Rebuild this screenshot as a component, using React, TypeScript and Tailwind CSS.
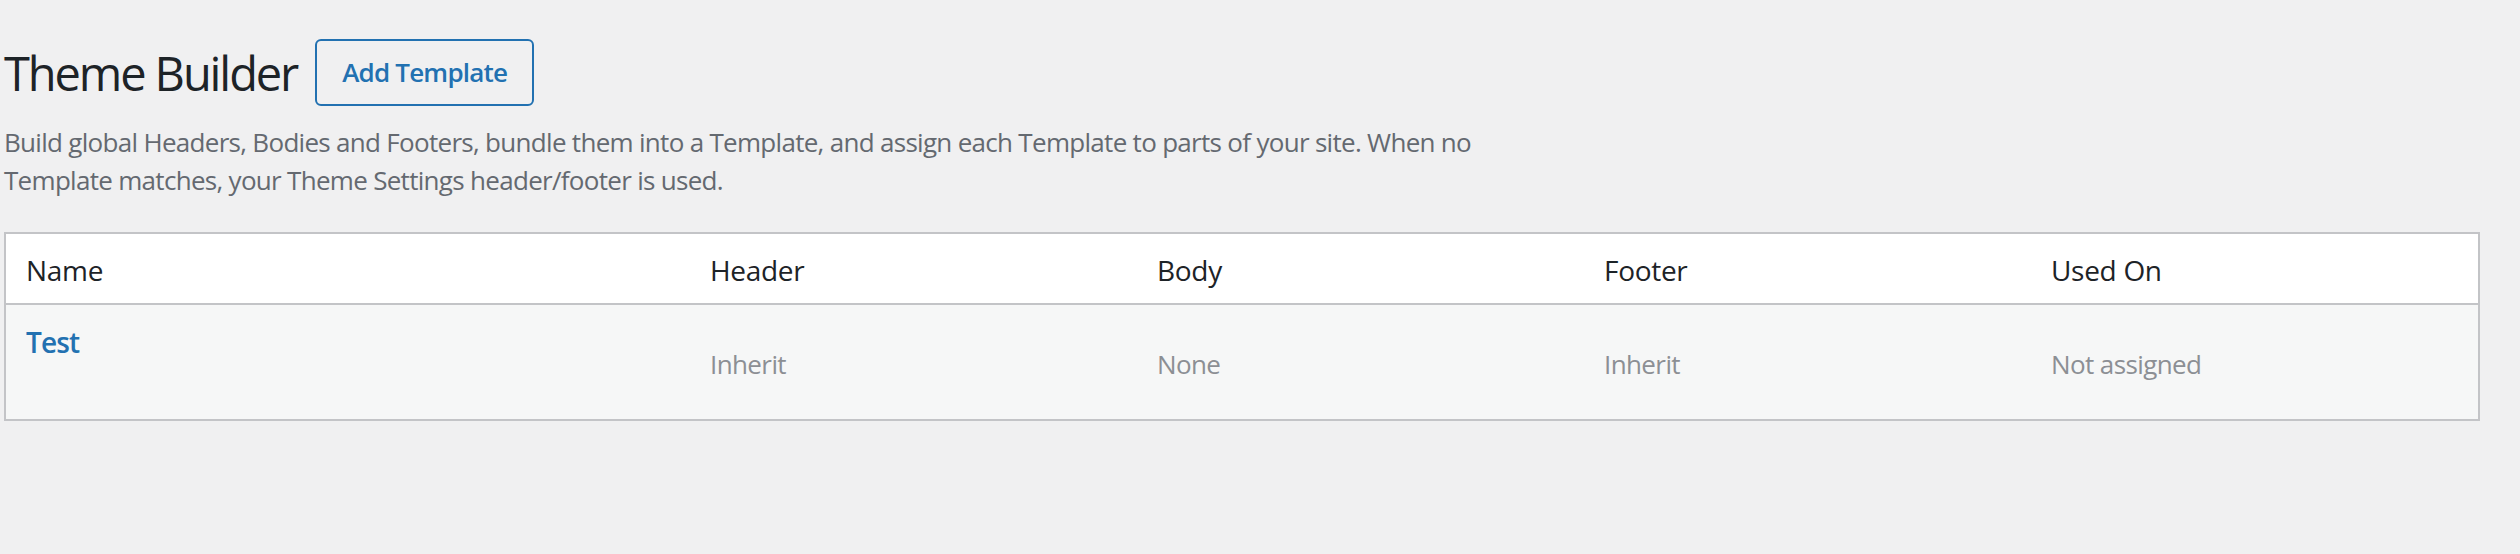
import React from "react";

const FONT = "font-['Open_Sans','Noto_Sans',sans-serif]";

type Template = {
  id: number;
  name: string;
  header: string;
  body: string;
  footer: string;
  usedOn: string;
};

const TEMPLATES: Template[] = [
  {
    id: 1,
    name: "Test",
    header: "Inherit",
    body: "None",
    footer: "Inherit",
    usedOn: "Not assigned",
  },
];

const COLUMNS = ["Name", "Header", "Body", "Footer", "Used On"];

// Grid columns shared by header and body rows so the cells line up.
const GRID = "grid grid-cols-[684px_447px_447px_447px_1fr]";

export default function App() {
  return (
    <main className={`min-h-screen bg-[#f0f0f1] ${FONT}`}>
      <div className="ml-[4px] mr-[40px]">
        <header className="flex items-center gap-[18px] pt-[39px]">
          <h1 className="text-[47px] leading-[60px] font-normal tracking-[-2.1px] text-[#1d2327]">
            Theme Builder
          </h1>
          <button
            type="button"
            className="h-[67px] px-[25px] border-2 border-[#2271b1] rounded-[6px] text-[26px] font-semibold tracking-[-0.8px] text-[#2271b1]"
          >
            Add Template
          </button>
        </header>

        <p className="mt-[17px] max-w-[1500px] text-[26px] leading-[38px] tracking-[-0.7px] text-[#646970]">
          Build global Headers, Bodies and Footers, bundle them into a
          Template, and assign each Template to parts of your site. When no
          Template matches, your Theme Settings header/footer is used.
        </p>

        <TemplateTable templates={TEMPLATES} />
      </div>
    </main>
  );
}

function TemplateTable({ templates }: { templates: Template[] }) {
  return (
    <div className="mt-[33px] border-2 border-[#c3c4c7] bg-white">
      <div className={`${GRID} h-[71px] items-center border-b-2 border-[#c3c4c7]`}>
        {COLUMNS.map((col) => (
          <div
            key={col}
            className="px-[20px] pt-[2px] text-[28px] tracking-[-0.3px] text-[#1d2327]"
          >
            {col}
          </div>
        ))}
      </div>
      {templates.map((t) => (
        <div key={t.id} className={`${GRID} min-h-[114px] bg-[#f6f7f7]`}>
          <div className="px-[20px] pt-[18px]">
            <a
              href="#"
              className="text-[28px] leading-[38px] font-semibold tracking-[-0.9px] text-[#2271b1]"
            >
              {t.name}
            </a>
          </div>
          {[t.header, t.body, t.footer, t.usedOn].map((v, i) => (
            <div
              key={i}
              className="flex items-center px-[20px] pt-[4px] text-[26px] leading-[38px] tracking-[-0.6px] text-[#8c8f94]"
            >
              {v}
            </div>
          ))}
        </div>
      ))}
    </div>
  );
}
